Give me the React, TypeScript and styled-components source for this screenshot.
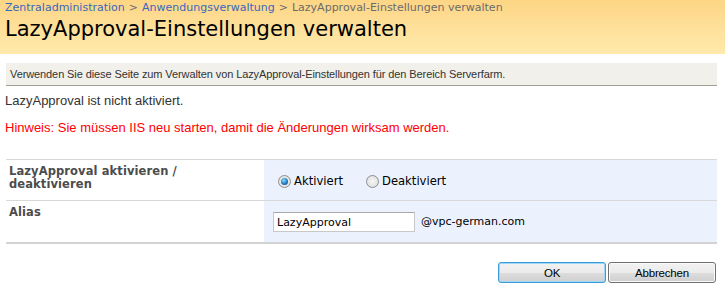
import React from "react";
import styled, { createGlobalStyle } from "styled-components";

const Global = createGlobalStyle`
  html, body { margin: 0; padding: 0; background: #fff; }
  body { font-family: "DejaVu Sans", Verdana, sans-serif; }
  * { box-sizing: border-box; }
`;

const narrow = `"Liberation Sans", Arial, sans-serif`;

const Page = styled.div`
  width: 725px;
  height: 289px;
  overflow: hidden;
`;

const Header = styled.header`
  height: 54px;
  padding: 1px 0 0 5px;
  background: linear-gradient(to bottom, #fdd585 0%, #fee29d 60%, #ffe9ab 100%);
`;

const Breadcrumb = styled.div`
  font-size: 11px;
  line-height: 14px;
  color: #6b6b6b;
`;

const Crumb = styled.a`
  color: #3966bf;
  text-decoration: none;
`;

const Sep = styled.span`
  color: #6b6b6b;
  margin: 0 4px;
`;

const Title = styled.h1`
  margin: 1px 0 0 0;
  font-weight: normal;
  font-size: 21px;
  line-height: 27px;
  color: #000;
`;

const Content = styled.main`
  padding: 9px 8px 0 6px;
`;

const Description = styled.div`
  height: 23px;
  background: #f1f0eb;
  border-bottom: 1px solid #a19f92;
  padding: 0 4px;
  font-family: ${narrow};
  font-size: 11px;
  letter-spacing: -0.1px;
  line-height: 22px;
  color: #333;
`;

const Message = styled.p<{ $warn?: boolean }>`
  margin: ${(p) => (p.$warn ? "11px" : "7px")} 0 0 -1px;
  font-family: ${narrow};
  font-size: 13px;
  line-height: 16px;
  color: ${(p) => (p.$warn ? "#ff0000" : "#333")};
`;

const Form = styled.div`
  margin-top: 23px;
  display: grid;
  grid-template-columns: 258px 1fr;
  border-top: 1px solid #d8d8d8;
  border-bottom: 2px solid #d3d3d3;
`;

const Label = styled.div<{ $last?: boolean }>`
  height: 41px;
  padding: 5px 50px 0 3px;
  font-size: 11.5px;
  font-weight: bold;
  line-height: 13px;
  letter-spacing: 0.1px;
  color: #4c4c4c;
  border-bottom: ${(p) => (p.$last ? "none" : "1px solid #d8d8d8")};
`;

const Field = styled.div<{ $last?: boolean }>`
  background: #ebf2fd;
  display: flex;
  align-items: ${(p) => (p.$last ? "flex-start" : "center")};
  padding: ${(p) => (p.$last ? "11px 0 0 9px" : "0 0 0 14px")};
  border-bottom: ${(p) => (p.$last ? "none" : "1px solid #d8d8d8")};
`;

const RadioOption = styled.label`
  display: flex;
  align-items: center;
  font-size: 11.6px;
  color: #000;
  margin-right: 23px;
  margin-top: 2px;
`;

const RadioDot = styled.span<{ $on?: boolean }>`
  width: 13px;
  height: 13px;
  border-radius: 50%;
  border: 1px solid #8f8f8f;
  background: radial-gradient(circle at 50% 50%, #f7f7f7 0%, #d9d9d9 100%);
  display: inline-flex;
  align-items: center;
  justify-content: center;
  margin-right: 3px;
  &::after {
    content: "";
    display: ${(p) => (p.$on ? "block" : "none")};
    width: 7px;
    height: 7px;
    border-radius: 50%;
    background: radial-gradient(circle at 40% 35%, #8fdcff 0%, #1a72b8 60%, #0c3f7a 100%);
  }
`;

const TextInput = styled.input`
  width: 142px;
  height: 20px;
  border: 1px solid #c8c8c8;
  border-top-color: #a8a8a8;
  background: #fff;
  font-family: "DejaVu Sans", Verdana, sans-serif;
  font-size: 11px;
  padding: 0 3px;
  color: #000;
  outline: none;
`;

const Suffix = styled.span`
  font-size: 11px;
  line-height: 20px;
  color: #000;
  margin-left: 6px;
`;

const Buttons = styled.div`
  display: flex;
  justify-content: flex-end;
  gap: 2px;
  margin: 18px 1px 0 0;
`;

const Button = styled.button<{ $focus?: boolean }>`
  width: 108px;
  height: 21px;
  border-radius: 3px;
  border: 1px solid ${(p) => (p.$focus ? "#3c9ad6" : "#707070")};
  box-shadow: ${(p) => (p.$focus ? "inset 0 0 0 1px #9fd8f6" : "inset 0 0 0 1px #fbfbfb")};
  background: linear-gradient(to bottom, #f2f2f2 0%, #ebebeb 50%, #dddddd 51%, #cfcfcf 100%);
  font-family: ${narrow};
  font-size: 11.5px;
  letter-spacing: -0.2px;
  color: #000;
  padding: 0;
`;

export default function App() {
  return (
    <Page>
      <Global />
      <Header>
        <Breadcrumb>
          <Crumb href="#">Zentraladministration</Crumb>
          <Sep>&gt;</Sep>
          <Crumb href="#">Anwendungsverwaltung</Crumb>
          <Sep>&gt;</Sep>
          LazyApproval-Einstellungen verwalten
        </Breadcrumb>
        <Title>LazyApproval-Einstellungen verwalten</Title>
      </Header>
      <Content>
        <Description>
          Verwenden Sie diese Seite zum Verwalten von LazyApproval-Einstellungen für den Bereich Serverfarm.
        </Description>
        <Message>LazyApproval ist nicht aktiviert.</Message>
        <Message $warn>Hinweis: Sie müssen IIS neu starten, damit die Änderungen wirksam werden.</Message>
        <Form>
          <Label>LazyApproval aktivieren / deaktivieren</Label>
          <Field>
            <RadioOption>
              <RadioDot $on />
              Aktiviert
            </RadioOption>
            <RadioOption>
              <RadioDot />
              Deaktiviert
            </RadioOption>
          </Field>
          <Label $last>Alias</Label>
          <Field $last>
            <TextInput defaultValue="LazyApproval" />
            <Suffix>@vpc-german.com</Suffix>
          </Field>
        </Form>
        <Buttons>
          <Button $focus>OK</Button>
          <Button>Abbrechen</Button>
        </Buttons>
      </Content>
    </Page>
  );
}
